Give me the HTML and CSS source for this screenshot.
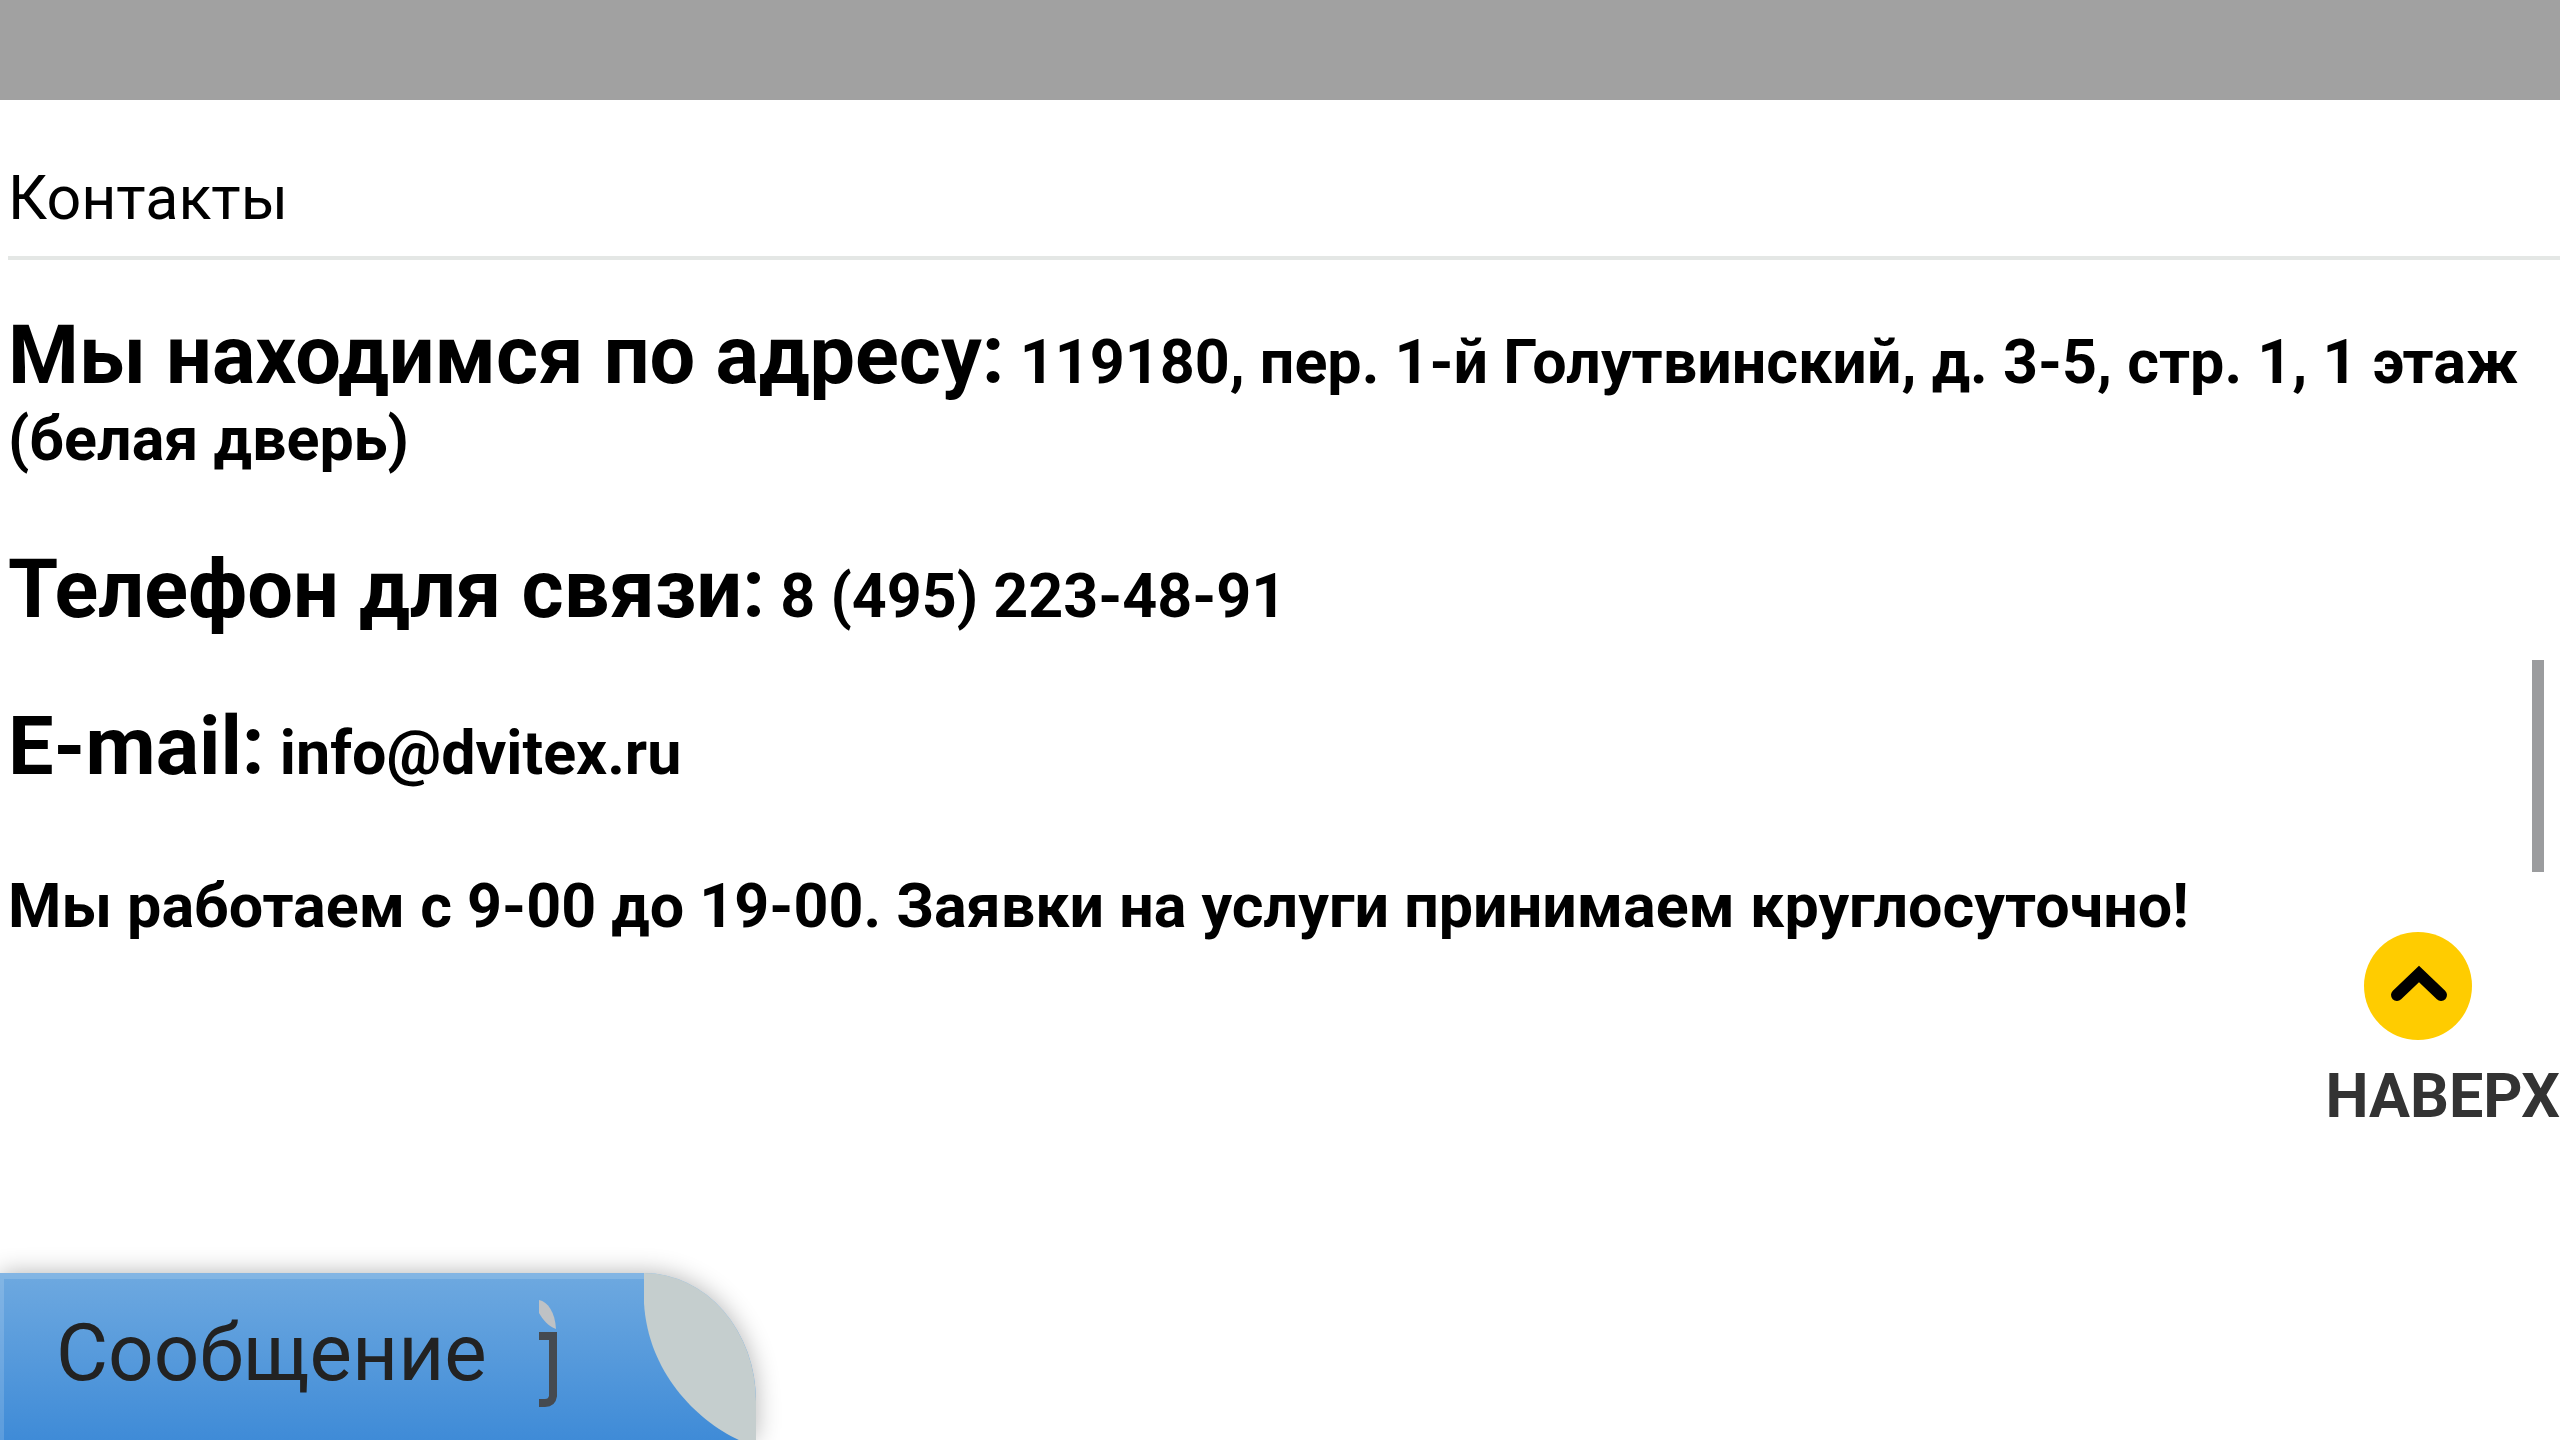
FILE: index.html
```html
<!DOCTYPE html>
<html lang="ru">
<head>
<meta charset="utf-8">
<title>Контакты</title>
<link rel="stylesheet" href="styles.css">
</head>
<body>
<header class="topbar"></header>
<main class="contacts">
<h1 class="title">Контакты</h1>
<p class="line"><span class="label">Мы находимся по адресу:</span> 119180, пер. 1-й Голутвинский, д. 3-5, стр. 1, 1 этаж (белая дверь)</p>
<p class="line"><span class="label">Телефон для связи:</span> 8 (495) 223-48-91</p>
<p class="line"><span class="label">E-mail:</span> info@dvitex.ru</p>
<p class="line hours">Мы работаем с 9-00 до 19-00. Заявки на услуги принимаем круглосуточно!</p>
</main>
<div class="scroll-thumb"></div>
<a class="to-top" href="#">
<svg class="to-top-icon" viewBox="0 0 108 108" aria-hidden="true"><circle cx="54" cy="54" r="54" fill="#fc0"/><path d="M33 63L55 42L77 63" fill="none" stroke="#000" stroke-width="12" stroke-linecap="round"/></svg>
<span>НАВЕРХ</span>
</a>
<button class="message" type="button">
<span class="message-text">Сообщение</span>
<svg class="message-icon" viewBox="0 0 20 108" aria-hidden="true"><path d="M0 0C9 2 16 12 17 29C9 26 4 20 0 13Z" fill="#bfc2c5"/><path d="M0 36H14V96Q13 103 6 103H0" fill="none" stroke="#454a50" stroke-width="8"/></svg>
<svg class="message-corner" viewBox="0 0 112 168" aria-hidden="true"><path d="M0 0H112V168H97C54 149 4 100 0 30Z" fill="#c5cece"/></svg>
</button>
</body>
</html>
```
FILE: styles.css
```css
* { box-sizing: border-box; }
body { margin: 0; background: #fff; color: #000; font-family: Roboto, sans-serif; min-height: 100vh; }
.topbar { height: 100px; background: #a1a1a1; }
.contacts { padding: 60px 0 0 8px; }
.title { margin: 0 0 57px; padding-bottom: 20px; border-bottom: 4px solid #e4e7e5; font-size: 61px; line-height: 76px; font-weight: 400; }
.line { margin: 0 0 73px; font-size: 61px; line-height: 77px; font-weight: 700; }
.hours { margin-top: 76px; }
.label { font-size: 81px; }
.scroll-thumb { position: fixed; right: 16px; top: 660px; width: 12px; height: 212px; background: #9b9c9e; }
.to-top { position: fixed; right: 0; top: 932px; display: flex; flex-direction: column; gap: 20px; font-size: 61px; line-height: 72px; font-weight: 700; color: #333; text-decoration: none; }
.to-top-icon { width: 108px; height: 108px; margin-left: 39px; }
.message { position: fixed; left: 0; bottom: 0; display: flex; align-items: flex-start; overflow: hidden; border: 0; padding: 0 0 0 56px; width: 756px; height: 167px; background: linear-gradient(#6ea9e0, #3f8bd7); box-shadow: 0 0 24px rgba(0, 0, 0, .3), inset 4px 6px 0 rgba(255, 255, 255, .15); border-radius: 0 112px 0 0 / 0 128px 0 0; font: 400 80px/94px Roboto, sans-serif; color: #222; }
.message-text { padding-top: 33px; }
.message-icon { width: 20px; height: 108px; margin: 27px 0 0 52px; }
.message-corner { width: 112px; height: 168px; margin-left: auto; }
```
